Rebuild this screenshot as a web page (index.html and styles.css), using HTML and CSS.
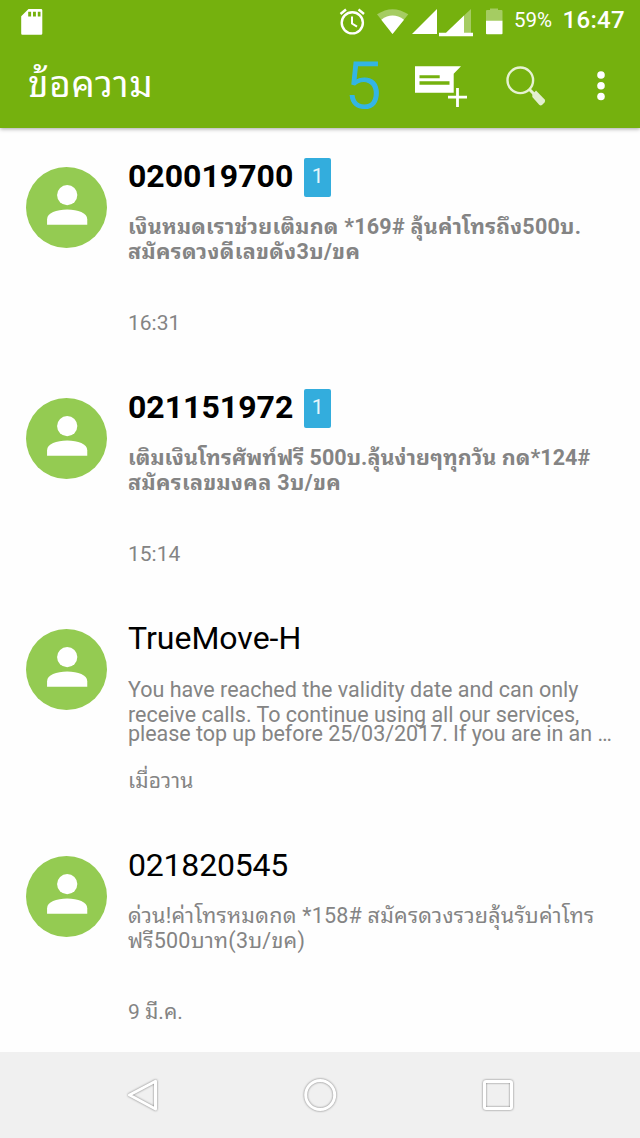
FILE: index.html
```html
<!DOCTYPE html>
<html lang="th">
<head>
  <meta charset="UTF-8"/>
  <meta name="viewport" content="width=device-width,initial-scale=1.0"/>
  <title>ข้อความ</title>
  <link rel="stylesheet" href="styles.css">
</head>
<body>

  <!-- shared avatar -->
  <svg width="0" height="0" class="defs">
    <symbol id="person" viewBox="0 0 80 80">
      <circle cx="40" cy="40" r="40" fill="#94cb52"/>
      <circle cx="40.7" cy="27.7" r="10" fill="#fff"/>
      <path d="M20.8 57V51.5C20.8 45.5 30 42 40.7 42S60.5 45.5 60.5 51.5V57Z" fill="#fff"/>
    </symbol>
  </svg>

  <header>
    <!-- STATUS BAR -->
    <div class="status">
      <svg class="sd" width="22" height="26" viewBox="0 0 22 26">
        <path fill="#fff" fill-rule="evenodd" d="M7.5 0H20Q21.3 0 21.3 1.3V24.5Q21.3 25.7 20 25.7H1.3Q.2 25.7 .2 24.5V7.3ZM7.2 2.8V7.6H10.1V2.8ZM12 2.8V7.6H14.9V2.8ZM16.8 2.8V7.6H19.5V2.8Z"/>
      </svg>
      <svg class="tray" width="172" height="30" viewBox="338 7 172 30">
        <g fill="none" stroke="#fff" stroke-width="2.4">
          <circle cx="352.3" cy="22.8" r="10.6"/>
          <path d="M352 16.5V23.5L357 26.7" stroke-width="2"/>
          <path d="M340.5 14L346 9.5M364 14L358.5 9.5"/>
        </g>
        <path fill="#fff" opacity=".35" d="M392.5 34L377 14.3Q392.5 4 408.3 14.3Z"/>
        <path fill="#fff" d="M392.5 34L381.3 19.7Q392.5 11.5 404 19.7Z"/>
        <path fill="#fff" d="M412 34H437V9Z"/>
        <path fill="#fff" opacity=".35" d="M464 15.5L471 9V33H464Z"/>
        <path fill="#fff" d="M439 32.7H446L464 15.5V32.7H473V36.2H439Z"/>
        <path fill="#fff" opacity=".35" d="M486 21V11Q486 10 487 10H490V8.5H498V10H501.5Q502.5 10 502.5 11V21Z"/>
        <path fill="#fff" d="M486 20.7H502.5V33.5Q502.5 34.3 501.5 34.3H487Q486 34.3 486 33.5Z"/>
      </svg>
      <span class="percent">59%</span>
      <span class="clock">16:47</span>
    </div>

    <!-- TOOLBAR -->
    <div class="toolbar">
      <h1>ข้อความ</h1>
      <span class="unread">5</span>
      <svg class="compose" width="54" height="42" viewBox="414 65 54 42">
        <path fill="#fff" fill-rule="evenodd" d="M415 66.3H461L453.7 73.7V92.7H415ZM419.5 75.3V78.3H439.7V75.3ZM419.5 81.3V84.7H449.5V81.3Z"/>
        <path d="M457.5 88V107M448 97.2H467" stroke="#fff" stroke-width="2.8"/>
      </svg>
      <svg class="search" width="42" height="42" viewBox="505 64 42 42">
        <circle cx="520.3" cy="79.3" r="12.8" fill="none" stroke="#e6f2d2" stroke-width="2.4"/>
        <path d="M529.5 88.5L534 93" stroke="#e6f2d2" stroke-width="3"/>
        <path d="M532.3 93.5L536 89.5L544.7 98.5Q545.7 100 544.5 101.5L542 104Q540.5 105 539.2 103.7L532.3 96Z" fill="#e3efcf"/>
      </svg>
      <svg class="more" width="8" height="30" viewBox="0 0 8 30" fill="#fff">
        <circle cx="4" cy="4" r="3.8"/>
        <circle cx="4" cy="14.8" r="3.8"/>
        <circle cx="4" cy="25.5" r="3.8"/>
      </svg>
    </div>
  </header>

  <main>
    <article class="thread new">
      <svg class="avatar"><use href="#person"/></svg>
      <div class="body">
        <div class="who"><h2>020019700</h2><span class="badge">1</span></div>
        <p class="msg"><span class="wide">เงินหมดเราช่วยเติมกด *169# ลุ้นค่าโทรถึง500บ.</span><span class="wider">สมัครดวงดีเลขดัง3บ/ขค</span></p>
        <time>16:31</time>
      </div>
    </article>

    <article class="thread new">
      <svg class="avatar"><use href="#person"/></svg>
      <div class="body">
        <div class="who"><h2>021151972</h2><span class="badge">1</span></div>
        <p class="msg"><span class="loose">เติมเงินโทรศัพท์ฟรี 500บ.ลุ้นง่ายๆทุกวัน กด*124#</span><span class="wider">สมัครเลขมงคล 3บ/ขค</span></p>
        <time>15:14</time>
      </div>
    </article>

    <article class="thread long">
      <svg class="avatar"><use href="#person"/></svg>
      <div class="body">
        <div class="who"><h2>TrueMove-H</h2></div>
        <p class="msg"><span>You have reached the validity date and can only</span><span>receive calls. To continue using all our services,</span><span class="last">please top up before 25/03/2017. If you are in an …</span></p>
        <time class="wide">เมื่อวาน</time>
      </div>
    </article>

    <article class="thread read">
      <svg class="avatar"><use href="#person"/></svg>
      <div class="body">
        <div class="who"><h2>021820545</h2></div>
        <p class="msg"><span class="wide">ด่วน!ค่าโทรหมดกด *158# สมัครดวงรวยลุ้นรับค่าโทร</span><span class="wide">ฟรี500บาท(3บ/ขค)</span></p>
        <time>9 มี.ค.</time>
      </div>
    </article>
  </main>

  <!-- SYSTEM KEYS -->
  <nav>
    <svg width="38" height="38" viewBox="0 0 38 38"><path d="M5.5 19L31.5 5.2V33Z"/></svg>
    <svg width="38" height="38" viewBox="0 0 38 38"><circle cx="18.2" cy="19" r="14.5"/></svg>
    <svg width="38" height="38" viewBox="0 0 38 38"><rect x="5.5" y="5.5" width="27" height="27" rx="1.5"/></svg>
  </nav>

</body>
</html>
```
FILE: styles.css
```css
* { box-sizing:border-box; }
body { margin:0; width:640px; height:1138px; display:flex; flex-direction:column; overflow:hidden; background:#fefefe; font-family:Roboto, "Noto Sans Thai Looped", "Noto Looped Thai", Loma, "Noto Sans Thai", "Noto Sans", sans-serif; }
h1, h2, p { margin:0; font-weight:400; }
svg { display:block; flex:none; }
.defs { position:absolute; }

header { height:128px; flex:none; background:#75b10e; color:#fff; box-shadow:0 1px 4px rgba(0,0,0,.35); }
.status { height:44px; display:flex; align-items:flex-start; padding:7px 15px 0 21px; }
.sd { margin-top:2px; }
.tray { margin-left:295px; }
.percent { font-size:20.5px; line-height:26px; margin-left:4px; width:50px; }
.clock { font-size:24px; line-height:26px; font-weight:500; letter-spacing:.3px; }

.toolbar { height:84px; display:flex; align-items:center; padding-left:28px; }
h1 { font-size:37px; width:317px; line-height:60px; letter-spacing:.6px; white-space:nowrap; margin-top:-3px; }
.unread { width:69px; font-size:65px; line-height:80px; font-weight:300; color:#33b5e5; -webkit-text-stroke:1.2px #33b5e5; }
.search { margin-left:37px; margin-top:-1px; }
.more { margin-left:50px; }

main { flex:1; overflow:hidden; }
.thread { height:231px; display:flex; padding:29px 0 0 26px; }
.avatar { width:81px; height:81px; margin:10px 21px 0 0; }
.who { display:flex; height:40px; align-items:center; }
h2 { font-size:32px; line-height:38px; color:#000; margin-top:-2px; }
.badge { width:27px; height:39px; margin-left:11px; border-radius:2px; background:#33addd; color:#e6f5fb; font-size:21px; line-height:37px; text-align:center; }
.msg { margin-top:17px; height:97px; font-size:21.5px; line-height:25px; color:#848484; }
.msg span { display:block; width:max-content; white-space:nowrap; }
.loose { letter-spacing:.06px; }
.wide { letter-spacing:.23px; }
.wider { letter-spacing:.38px; }
time { display:block; font-size:21px; line-height:24px; color:#848484; white-space:nowrap; }
.new h2, .new .msg { font-weight:700; }
.long { height:226px; }
.long .msg { height:92px; margin-top:18px; }
.long .last { line-height:14px; letter-spacing:-.04px; }
.read { padding-top:30px; }
.read h2 { letter-spacing:-.2px; margin-top:-3px; }

nav { height:86px; flex:none; display:flex; justify-content:space-between; padding:24px 123px 0 124px; background:#f0f0f0; }
nav svg { fill:none; stroke:#fff; stroke-width:3; stroke-linejoin:round; filter:drop-shadow(0 0 1px #777); }
```
